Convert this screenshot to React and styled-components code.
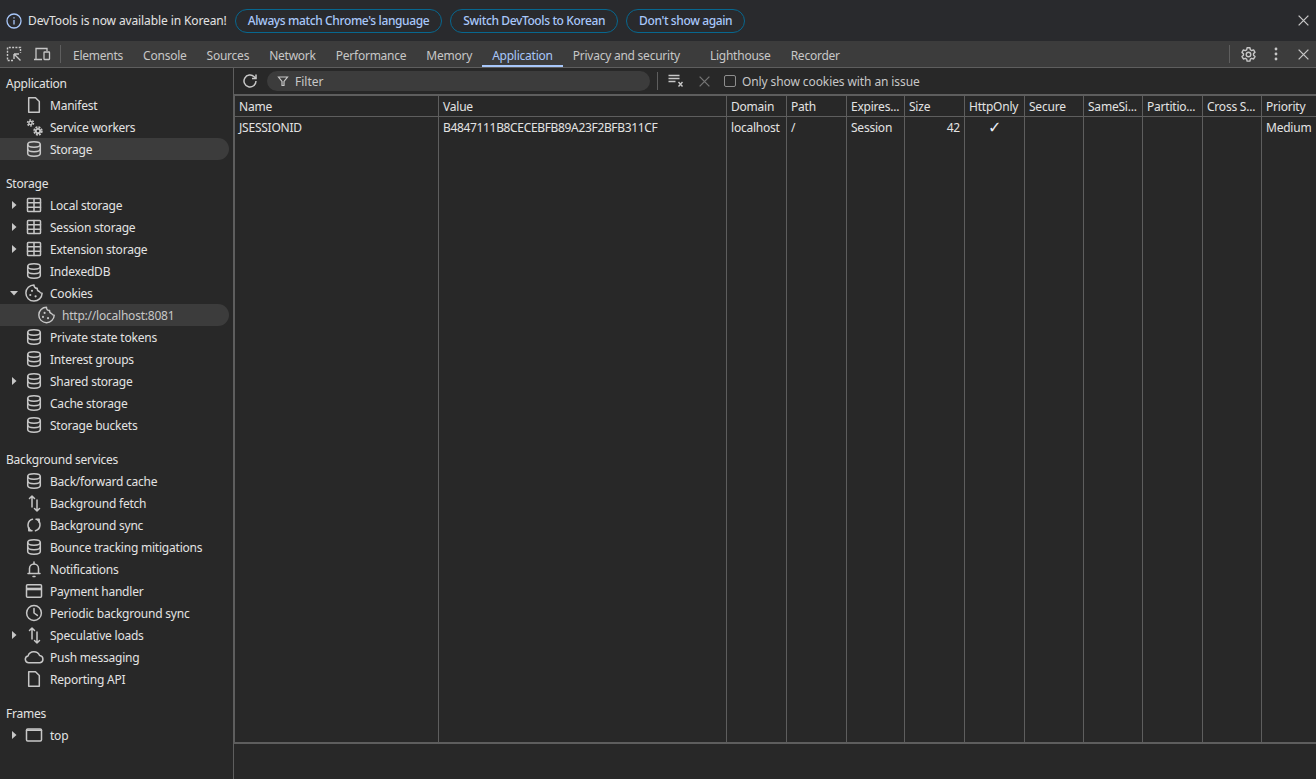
import React from "react";
import styled, { createGlobalStyle } from "styled-components";

const GlobalStyle = createGlobalStyle`
  html, body {
    margin: 0;
    height: 100%;
    background: #282828;
    overflow: hidden;
  }
  #root { height: 100%; }
  * { box-sizing: border-box; }
`;

const Page = styled.div`
  width: 1316px;
  height: 779px;
  display: flex;
  flex-direction: column;
  font-family: "Noto Sans", "Liberation Sans", sans-serif;
  font-size: 12px;
  letter-spacing: -0.22px;
  color: #e3e3e3;
`;

const InfoBar = styled.div`
  height: 41px;
  flex: none;
  display: flex;
  align-items: center;
  padding-left: 6px;
  background: #292a2d;
`;

const InfoText = styled.span`
  margin: 0 8px 0 6px;
  letter-spacing: -0.11px;
  color: #e3e3e3;
`;

const InfoButton = styled.button`
  height: 24px;
  margin-right: 8px;
  padding: 0 12px;
  border: 1px solid #07678f;
  border-radius: 12px;
  background: transparent;
  color: #a8c7fa;
  font: 500 12px "Noto Sans", sans-serif;
  letter-spacing: -0.38px;
`;

const Spacer = styled.div`
  flex: 1;
`;

const TabBar = styled.div`
  height: 27px;
  flex: none;
  display: flex;
  align-items: center;
  padding-left: 4px;
  background: #3c3c3c;
  border-bottom: 1px solid #5e5e5e;
`;

const ToolButton = styled.div`
  width: ${(p) => p.$w || 28}px;
  height: 26px;
  flex: none;
  margin-left: ${(p) => p.$ml || 0}px;
  display: flex;
  align-items: center;
  justify-content: center;
  color: #c7c7c7;
`;

const VLine = styled.div`
  width: 1px;
  height: 18px;
  flex: none;
  margin: ${(p) => p.$m || "0"};
  background: #5e5e5e;
`;

const Tab = styled.div`
  height: 26px;
  flex: none;
  display: flex;
  align-items: center;
  padding: 2px 10px 0;
  margin-right: ${(p) => p.$after || 0}px;
  letter-spacing: -0.24px;
  color: ${(p) => (p.$active ? "#a8c7fa" : "#c7c7c7")};
  box-shadow: ${(p) => (p.$active ? "inset 0 -2px 0 #a8c7fa" : "none")};
`;

const Body = styled.div`
  flex: 1;
  min-height: 0;
  display: flex;
`;

const Sidebar = styled.aside`
  width: 234px;
  flex: none;
  padding-top: 4px;
  background: #282828;
  border-right: 1px solid #5e5e5e;
`;

const Section = styled.section`
  margin-bottom: 12px;
`;

const Heading = styled.div`
  height: 22px;
  display: flex;
  align-items: center;
  padding-left: 6px;
  color: #e3e3e3;
`;

const Row = styled.div`
  height: 22px;
  width: 229px;
  display: flex;
  align-items: center;
  padding-left: ${(p) => (p.$child ? 37 : 10)}px;
  background: ${(p) => (p.$selected ? "#3c3c3c" : "transparent")};
  border-radius: ${(p) => (p.$selected ? "0 11px 11px 0" : "0")};
  color: ${(p) => (p.$selected && p.$child ? "#c7c7c7" : "#e3e3e3")};
`;

const Arrow = styled.span`
  width: 8px;
  flex: none;
  display: flex;
  justify-content: center;
  margin-right: 6px;
`;

const RowIcon = styled.span`
  width: ${(p) => (p.$child ? 19 : 20)}px;
  flex: none;
  display: flex;
  justify-content: center;
  margin-right: 6px;
  color: #c7c7c7;
`;

const Main = styled.main`
  flex: 1;
  min-width: 0;
  display: flex;
  flex-direction: column;
  background: #282828;
`;

const CookieBar = styled.div`
  height: 28px;
  flex: none;
  display: flex;
  align-items: center;
  padding-left: 2px;
  border-bottom: 2px solid #5e5e5e;
`;

const FilterBox = styled.div`
  width: 383px;
  height: 20px;
  margin-left: 3px;
  flex: none;
  display: flex;
  align-items: center;
  gap: 6px;
  padding-left: 10px;
  border-radius: 10px;
  background: #3c3c3c;
  letter-spacing: 0;
  color: #c7c7c7;
`;

const Check = styled.span`
  width: 12px;
  height: 12px;
  flex: none;
  margin: 0 6px 0 5px;
  border: 1px solid #8e8e8e;
  border-radius: 2px;
`;

const BarLabel = styled.span`
  letter-spacing: -0.1px;
  color: #c7c7c7;
`;

const Grid = styled.div`
  flex: 1;
  min-height: 0;
  display: grid;
  grid-template-columns: 204px 288px 60px 60px 58px 60px 60px 59px 59px 60px 59px 1fr;
  grid-template-rows: 21px 22px 1fr;
  border-left: 1px solid #5e5e5e;
  border-bottom: 2px solid #5e5e5e;
`;

const HeadCell = styled.div`
  display: flex;
  align-items: center;
  padding: 0 4px;
  overflow: hidden;
  white-space: nowrap;
  border-right: ${(p) => (p.$last ? "0" : "1px solid #5e5e5e")};
  border-bottom: 1px solid #5e5e5e;
  color: #e3e3e3;
`;

const Cell = styled.div`
  display: flex;
  align-items: center;
  justify-content: ${(p) => p.$align || "flex-start"};
  padding: 0 4px 2px;
  overflow: hidden;
  white-space: nowrap;
  letter-spacing: ${(p) => (p.$tight ? "-0.34px" : "inherit")};
  border-right: ${(p) => (p.$last ? "0" : "1px solid #5e5e5e")};
  color: #e3e3e3;
`;

const CheckMark = styled.span`
  font: 16px "DejaVu Sans", sans-serif;
  color: #e8eef8;
`;

const Footer = styled.div`
  height: 35px;
  flex: none;
`;

const Svg = ({ size = 20, children, sw = 1.5 }) => (
  <svg
    width={size}
    height={size}
    viewBox="0 0 20 20"
    fill="none"
    stroke="currentColor"
    strokeWidth={sw}
    strokeLinecap="round"
    strokeLinejoin="round"
  >
    {children}
  </svg>
);

const icons = {
  file: (
    <Svg>
      <path d="M4.700 2.700h6.800l3.800 3.800v10.800H4.700z" />
    </Svg>
  ),
  gears: (
    <Svg>
      <circle cx="6.500" cy="6" r="1.700" />
      <circle cx="6.500" cy="6" r="3" strokeWidth="1.500" strokeLinecap="butt" strokeDasharray="1.700 1.450" />
      <circle cx="14" cy="14" r="2.200" strokeWidth="1.800" />
      <circle cx="14" cy="14" r="3.900" strokeWidth="1.600" strokeLinecap="butt" strokeDasharray="2 1.060" />
    </Svg>
  ),
  db: (
    <Svg>
      <ellipse cx="10" cy="5.500" rx="6.300" ry="2.700" />
      <path d="M3.700 5.500v9c0 1.500 2.800 2.700 6.300 2.700s6.300-1.200 6.300-2.700v-9" />
      <path d="M3.700 10c0 1.500 2.800 2.700 6.300 2.700s6.300-1.200 6.300-2.700" />
    </Svg>
  ),
  table: (
    <Svg>
      <rect x="3.500" y="3.500" width="13" height="13" rx="0.800" />
      <path d="M3.500 7.800h13M3.500 12.200h13M10 3.500v13" />
    </Svg>
  ),
  cookie: (
    <Svg>
      <path d="M10 1.900a3 3 0 0 0 3.200 3.400 3 3 0 0 0 2.200 3.200 2.800 2.800 0 0 0 2.700 1.700A8.100 8.100 0 1 1 10 1.900z" />
      <circle cx="8" cy="7.800" r="1.100" fill="currentColor" stroke="none" />
      <circle cx="6.300" cy="12" r="1.100" fill="currentColor" stroke="none" />
      <circle cx="11.600" cy="13.300" r="1.100" fill="currentColor" stroke="none" />
    </Svg>
  ),
  updown: (
    <Svg>
      <path d="M8 14V3M5.500 5.500 8 3l2.500 2.500M13 7v11M10.500 15.500 13 18l2.500-2.500" />
    </Svg>
  ),
  sync: (
    <Svg>
      <path d="M7 15.300A6 6 0 0 1 8.500 4.300M13 4.700A6 6 0 0 1 11.500 15.700" />
      <path d="M4.800 12.600v3.200H8M15.200 7.400V4.200H12" />
    </Svg>
  ),
  bell: (
    <Svg>
      <path d="M5.500 14.500V9.500a4.500 4.500 0 0 1 9 0v5M4 14.500h12" />
      <path d="M9 17.500h2M10 3v2" />
    </Svg>
  ),
  card: (
    <Svg>
      <rect x="2.500" y="3.800" width="15" height="12.400" rx="1" />
      <path d="M2.500 8h15" strokeWidth="2.600" strokeLinecap="butt" />
    </Svg>
  ),
  clock: (
    <Svg>
      <circle cx="10" cy="10" r="7.400" />
      <path d="M10 5.500V10l3.400 2.400" />
    </Svg>
  ),
  cloud: (
    <Svg>
      <path d="M4.700 15.800a3.500 3.500 0 0 1-.7-6.900 6.300 6.300 0 0 1 11.600-.4 3.700 3.700 0 0 1 .4 7.300z" />
    </Svg>
  ),
  frame: (
    <Svg>
      <rect x="2.500" y="4" width="15" height="12" rx="1.200" />
      <path d="M2.500 5.200h15" />
    </Svg>
  ),
};

const Caret = ({ open }) => (
  <svg width="8" height="8" viewBox="0 0 8 8" fill="#c7c7c7">
    {open ? <path d="M0 2h8L4 6.500z" /> : <path d="M2 0l4.500 4L2 8z" />}
  </svg>
);

const CloseIcon = ({ color = "#c7c7c7" }) => (
  <svg width="13" height="13" viewBox="0 0 12 12" stroke={color} strokeWidth="1.200" fill="none">
    <path d="M1.500 1.500l9 9M10.500 1.500l-9 9" />
  </svg>
);

const sections = [
  {
    title: "Application",
    rows: [
      { icon: "file", label: "Manifest" },
      { icon: "gears", label: "Service workers" },
      { icon: "db", label: "Storage", selected: true },
    ],
  },
  {
    title: "Storage",
    rows: [
      { icon: "table", label: "Local storage", caret: "closed" },
      { icon: "table", label: "Session storage", caret: "closed" },
      { icon: "table", label: "Extension storage", caret: "closed" },
      { icon: "db", label: "IndexedDB" },
      { icon: "cookie", label: "Cookies", caret: "open" },
      { icon: "cookie", label: "http://localhost:8081", child: true, selected: true },
      { icon: "db", label: "Private state tokens" },
      { icon: "db", label: "Interest groups" },
      { icon: "db", label: "Shared storage", caret: "closed" },
      { icon: "db", label: "Cache storage" },
      { icon: "db", label: "Storage buckets" },
    ],
  },
  {
    title: "Background services",
    rows: [
      { icon: "db", label: "Back/forward cache" },
      { icon: "updown", label: "Background fetch" },
      { icon: "sync", label: "Background sync" },
      { icon: "db", label: "Bounce tracking mitigations" },
      { icon: "bell", label: "Notifications" },
      { icon: "card", label: "Payment handler" },
      { icon: "clock", label: "Periodic background sync" },
      { icon: "updown", label: "Speculative loads", caret: "closed" },
      { icon: "cloud", label: "Push messaging" },
      { icon: "file", label: "Reporting API" },
    ],
  },
  {
    title: "Frames",
    rows: [{ icon: "frame", label: "top", caret: "closed" }],
  },
];

const tabs = [
  { label: "Elements" },
  { label: "Console" },
  { label: "Sources" },
  { label: "Network" },
  { label: "Performance" },
  { label: "Memory" },
  { label: "Application", active: true },
  { label: "Privacy and security", after: 10 },
  { label: "Lighthouse" },
  { label: "Recorder" },
];

const columns = [
  "Name", "Value", "Domain", "Path", "Expires...", "Size",
  "HttpOnly", "Secure", "SameSi...", "Partitio...", "Cross S...", "Priority",
];

const cookie = [
  { text: "JSESSIONID" },
  { text: "B4847111B8CECEBFB89A23F2BFB311CF", tight: true },
  { text: "localhost" },
  { text: "/" },
  { text: "Session" },
  { text: "42", align: "flex-end" },
  { text: <CheckMark>✓</CheckMark>, align: "center" },
  { text: "" },
  { text: "" },
  { text: "" },
  { text: "" },
  { text: "Medium" },
];

export default function App() {
  return (
    <Page>
      <GlobalStyle />
      <InfoBar>
        <svg width="16" height="16" viewBox="0 0 16 16" fill="none" stroke="#a8c7fa" strokeWidth="1.300">
          <circle cx="8" cy="8" r="7" />
          <path d="M8 7v4.500M8 4.200v1.400" />
        </svg>
        <InfoText>DevTools is now available in Korean!</InfoText>
        <InfoButton>Always match Chrome's language</InfoButton>
        <InfoButton>Switch DevTools to Korean</InfoButton>
        <InfoButton>Don't show again</InfoButton>
        <Spacer />
        <ToolButton $w={26}>
          <CloseIcon />
        </ToolButton>
      </InfoBar>

      <TabBar>
        <ToolButton $w={20}>
          <svg width="16" height="16" viewBox="0 0 16 16" fill="none" stroke="#c7c7c7" strokeWidth="1.400">
            <path d="M7 14.500H1.500V1.500h13V7" strokeDasharray="2 1.300" />
            <path d="M8 8h5M8 8v5M8 8l6.500 6.500" />
          </svg>
        </ToolButton>
        <ToolButton $w={28} $ml={4}>
          <svg width="18" height="16" viewBox="0 0 18 16" fill="none" stroke="#c7c7c7" strokeWidth="1.300">
            <path d="M1 13.500h8M3 13.500V2.500h11V5" />
            <rect x="11" y="6" width="5.500" height="7.500" rx="0.500" />
          </svg>
        </ToolButton>
        <VLine $m="0 2px 0 4px" />
        {tabs.map((t) => (
          <Tab key={t.label} $active={t.active} $after={t.after}>
            {t.label}
          </Tab>
        ))}
        <Spacer />
        <VLine $m="0 4px 0 0" />
        <ToolButton $w={28}>
          <svg width="17" height="17" viewBox="0 0 24 24" fill="none" stroke="#c7c7c7" strokeWidth="2" strokeLinejoin="round">
            <path d="M10 2.500h4l.6 2.800 1.900 1.100 2.700-.9 2 3.400-2.100 1.900v2.200l2.100 1.900-2 3.400-2.700-.9-1.900 1.100-.6 2.800h-4l-.6-2.800-1.900-1.100-2.700.9-2-3.400L4.900 13.100v-2.200L2.800 9l2-3.400 2.700.9 1.900-1.100z" />
            <circle cx="12" cy="12" r="3.200" />
          </svg>
        </ToolButton>
        <ToolButton $w={28}>
          <svg width="4" height="14" viewBox="0 0 4 14" fill="#c7c7c7">
            <circle cx="2" cy="2" r="1.400" />
            <circle cx="2" cy="7" r="1.400" />
            <circle cx="2" cy="12" r="1.400" />
          </svg>
        </ToolButton>
        <ToolButton $w={26}>
          <CloseIcon />
        </ToolButton>
      </TabBar>

      <Body>
        <Sidebar>
          {sections.map((s) => (
            <Section key={s.title}>
              <Heading>{s.title}</Heading>
              {s.rows.map((r) => (
                <Row key={r.label} $selected={r.selected} $child={r.child}>
                  {!r.child && (
                    <Arrow>{r.caret && <Caret open={r.caret === "open"} />}</Arrow>
                  )}
                  <RowIcon $child={r.child}>{icons[r.icon]}</RowIcon>
                  {r.label}
                </Row>
              ))}
            </Section>
          ))}
        </Sidebar>

        <Main>
          <CookieBar>
            <ToolButton $w={28}>
              <svg width="18" height="18" viewBox="0 0 18 18" fill="none" stroke="#c7c7c7" strokeWidth="1.500">
                <path d="M15 9a6 6 0 1 1-1.800-4.300L15 6.500" />
                <path d="M15 2.500v4h-4" />
              </svg>
            </ToolButton>
            <FilterBox>
              <svg width="12" height="12" viewBox="0 0 12 12" fill="none" stroke="#c7c7c7" strokeWidth="1.200">
                <path d="M1.500 2h9L7 6.500v4H5v-4z" />
              </svg>
              Filter
            </FilterBox>
            <VLine $m="0 5px 0 7px" />
            <ToolButton $w={26}>
              <svg width="16" height="14" viewBox="0 0 16 14" fill="none" stroke="#c7c7c7" strokeWidth="1.400">
                <path d="M0.500 1.500h11M0.500 4.500h11M0.500 7.500h7M10.500 8l4 4.500M14.500 8l-4 4.500" />
              </svg>
            </ToolButton>
            <ToolButton $w={30}>
              <CloseIcon color="#757575" />
            </ToolButton>
            <Check />
            <BarLabel>Only show cookies with an issue</BarLabel>
          </CookieBar>
          <Grid>
            {columns.map((c, i) => (
              <HeadCell key={c} $last={i === columns.length - 1}>
                {c}
              </HeadCell>
            ))}
            {cookie.map((c, i) => (
              <Cell key={i} $align={c.align} $tight={c.tight} $last={i === cookie.length - 1}>
                {c.text}
              </Cell>
            ))}
            {columns.map((c, i) => (
              <Cell key={c} $last={i === columns.length - 1} />
            ))}
          </Grid>
          <Footer />
        </Main>
      </Body>
    </Page>
  );
}
